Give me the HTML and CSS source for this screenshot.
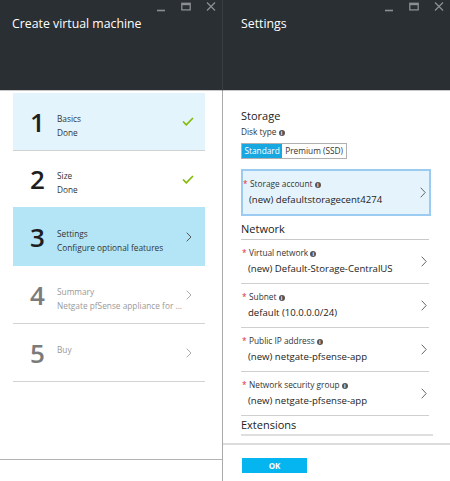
FILE: index.html
```html
<!DOCTYPE html>
<html>
<head>
<meta charset="utf-8">
<link rel="stylesheet" href="styles.css">
</head>
<body>
<div class="blade blade-left">
  <header class="hdr hdr-left">
    <div class="ctrls">
      <svg class="ic" width="10" height="12" viewBox="0 0 10 12"><path d="M1 10.5H9" stroke="#8b8f93" stroke-width="1.6"/></svg>
      <svg class="ic" width="10" height="12" viewBox="0 0 10 12"><rect x="0.8" y="3.3" width="8.4" height="6.6" fill="none" stroke="#8b8f93" stroke-width="1.3"/><path d="M0.8 4.2H9.2" stroke="#8b8f93" stroke-width="2"/></svg>
      <svg class="ic" width="10" height="12" viewBox="0 0 10 12"><path d="M1 2.5L9 10.5M9 2.5L1 10.5" stroke="#8b8f93" stroke-width="1.3"/></svg>
    </div>
    <div class="title">Create virtual machine</div>
  </header>
  <main class="steps">
    <div class="step s1">
      <div class="num">1</div>
      <div class="lbl"><div>Basics</div><div>Done</div></div>
      <svg class="mark" width="12" height="9" viewBox="0 0 12 9"><path d="M1 4.5L4.3 7.8L11 1" fill="none" stroke="#7fba00" stroke-width="1.6"/></svg>
    </div>
    <div class="step s2">
      <div class="num">2</div>
      <div class="lbl"><div>Size</div><div>Done</div></div>
      <svg class="mark" width="12" height="9" viewBox="0 0 12 9"><path d="M1 4.5L4.3 7.8L11 1" fill="none" stroke="#7fba00" stroke-width="1.6"/></svg>
    </div>
    <div class="step s3">
      <div class="num">3</div>
      <div class="lbl"><div>Settings</div><div>Configure optional features</div></div>
      <svg class="mark chev-l" width="6" height="10" viewBox="0 0 6 10"><path d="M0.7 0.7L5 5L0.7 9.3" fill="none" stroke="#555" stroke-width="1"/></svg>
    </div>
    <div class="step dim">
      <div class="num">4</div>
      <div class="lbl"><div>Summary</div><div>Netgate pfSense appliance for ...</div></div>
      <svg class="mark chev-l" width="6" height="10" viewBox="0 0 6 10"><path d="M0.7 0.7L5 5L0.7 9.3" fill="none" stroke="#aaa" stroke-width="1"/></svg>
    </div>
    <div class="step dim">
      <div class="num">5</div>
      <div class="lbl"><div>Buy</div><div>&nbsp;</div></div>
      <svg class="mark chev-l" width="6" height="10" viewBox="0 0 6 10"><path d="M0.7 0.7L5 5L0.7 9.3" fill="none" stroke="#aaa" stroke-width="1"/></svg>
    </div>
  </main>
  <footer class="foot foot-left"></footer>
</div>
<div class="blade blade-right">
  <header class="hdr hdr-right">
    <div class="ctrls">
      <svg class="ic" width="10" height="12" viewBox="0 0 10 12"><path d="M1 10.5H9" stroke="#8b8f93" stroke-width="1.6"/></svg>
      <svg class="ic" width="10" height="12" viewBox="0 0 10 12"><rect x="0.8" y="3.3" width="8.4" height="6.6" fill="none" stroke="#8b8f93" stroke-width="1.3"/><path d="M0.8 4.2H9.2" stroke="#8b8f93" stroke-width="2"/></svg>
      <svg class="ic" width="10" height="12" viewBox="0 0 10 12"><path d="M1 2.5L9 10.5M9 2.5L1 10.5" stroke="#8b8f93" stroke-width="1.3"/></svg>
    </div>
    <div class="title title-right">Settings</div>
  </header>
  <main class="settings">
    <div class="sec">Storage</div>
    <div class="small">Disk type <span class="info">i</span></div>
    <div class="toggle"><span class="opt on">Standard</span><span class="opt">Premium (SSD)</span></div>
    <div class="row box">
      <div class="rtext">
        <div class="rlabel"><span class="req">*</span>Storage account <span class="info">i</span></div>
        <div class="rval">(new) defaultstoragecent4274</div>
      </div>
      <svg class="chev" width="6" height="11" viewBox="0 0 6 11"><path d="M0.7 0.7L5.2 5.5L0.7 10.3" fill="none" stroke="#666" stroke-width="1"/></svg>
    </div>
    <div class="sec sec-line">Network</div>
    <div class="row">
      <div class="rtext">
        <div class="rlabel"><span class="req">*</span>Virtual network <span class="info">i</span></div>
        <div class="rval">(new) Default-Storage-CentralUS</div>
      </div>
      <svg class="chev" width="6" height="11" viewBox="0 0 6 11"><path d="M0.7 0.7L5.2 5.5L0.7 10.3" fill="none" stroke="#666" stroke-width="1"/></svg>
    </div>
    <div class="row">
      <div class="rtext">
        <div class="rlabel"><span class="req">*</span>Subnet <span class="info">i</span></div>
        <div class="rval">default (10.0.0.0/24)</div>
      </div>
      <svg class="chev" width="6" height="11" viewBox="0 0 6 11"><path d="M0.7 0.7L5.2 5.5L0.7 10.3" fill="none" stroke="#666" stroke-width="1"/></svg>
    </div>
    <div class="row">
      <div class="rtext">
        <div class="rlabel"><span class="req">*</span>Public IP address <span class="info">i</span></div>
        <div class="rval">(new) netgate-pfsense-app</div>
      </div>
      <svg class="chev" width="6" height="11" viewBox="0 0 6 11"><path d="M0.7 0.7L5.2 5.5L0.7 10.3" fill="none" stroke="#666" stroke-width="1"/></svg>
    </div>
    <div class="row">
      <div class="rtext">
        <div class="rlabel"><span class="req">*</span>Network security group <span class="info">i</span></div>
        <div class="rval">(new) netgate-pfsense-app</div>
      </div>
      <svg class="chev" width="6" height="11" viewBox="0 0 6 11"><path d="M0.7 0.7L5.2 5.5L0.7 10.3" fill="none" stroke="#666" stroke-width="1"/></svg>
    </div>
    <div class="sec sec-ext">Extensions</div>
  </main>
  <footer class="foot foot-right">
    <button class="ok">OK</button>
  </footer>
</div>
</body>
</html>
```

FILE: styles.css
```css
* { box-sizing: border-box; }
html, body { margin: 0; padding: 0; }
body {
  width: 450px;
  height: 481px;
  display: flex;
  overflow: hidden;
  background: #fff;
  font-family: "Open Sans", "Noto Sans", sans-serif;
  color: #222;
}
.blade {
  display: flex;
  flex-direction: column;
  height: 481px;
}
.blade-left { width: 223px; }
.blade-right { flex: 1; }

.hdr {
  height: 91px;
  background: #2a2f33;
  border-bottom: 1px solid #c8c8c8;
  display: flex;
  flex-direction: column;
}
.hdr-left { border-right: 1px solid #3a3f44; }
.ctrls {
  display: flex;
  justify-content: flex-end;
  gap: 15px;
  padding: 0 6px 0 0;
  height: 14px;
}
.ic { display: block; }
.title {
  color: #fff;
  font-size: 12.3px;
  line-height: 20px;
  padding-left: 12px;
}
.title-right { padding-left: 18px; }

/* left steps */
.steps {
  flex: 1;
  padding: 2px 17px 0 13px;
  border-right: 1px solid #a9a9a9;
}
.step {
  height: 58px;
  display: flex;
  align-items: center;
  border-bottom: 1px solid #d2d2d2;
}
.s1 { background: #e4f4fc; }
.s2 { height: 56px; border-bottom: none; }
.s3 { height: 59px; border-bottom: none; background: #b3e5f6; }
.num {
  width: 44px;
  padding-left: 17px;
  font-size: 26px;
  font-weight: 600;
  line-height: 30px;
  color: #1e1e1e;
}
.lbl {
  flex: 1;
  font-size: 8.3px;
  line-height: 14px;
  margin-top: 8px;
  color: #333;
  white-space: nowrap;
}
.mark { margin-right: 11px; display: block; }
.chev-l { margin-right: 13px; }
.dim .num { color: #7b7b7b; }
.dim .lbl { color: #999; }
.foot-left {
  height: 22px;
  border-top: 1px solid #b4b4b4;
  border-right: 1px solid #a9a9a9;
}

/* right settings */
.settings {
  flex: 1;
  padding: 17px 21px 0 18px;
}
.sec {
  font-size: 11px;
  line-height: 16px;
  color: #222;
}
.sec-line {
  margin-top: 5px;
  padding-bottom: 2px;
  border-bottom: 1px solid #c9c9c9;
}
.sec-ext {
  line-height: 17px;
  padding-bottom: 1px;
  border-bottom: 2px solid #dedede;
  margin-right: -4px;
}
.small {
  font-size: 8.3px;
  line-height: 12px;
  margin-top: 2px;
  color: #333;
}
.info {
  display: inline-block;
  width: 6px;
  height: 6px;
  border-radius: 50%;
  background: #555;
  color: #fff;
  font-size: 5px;
  line-height: 6px;
  text-align: center;
  font-weight: bold;
  vertical-align: 0px;
}
.toggle {
  display: flex;
  width: 106px;
  margin-top: 5px;
  border: 1px solid #b0b0b0;
  height: 16px;
  white-space: nowrap;
}
.opt {
  font-size: 8.3px;
  line-height: 14px;
  padding: 0 3px;
  color: #333;
}
.opt.on { background: #17a7e1; color: #fff; width: 42px; text-align: center; padding: 0; }

.row {
  display: flex;
  align-items: center;
  height: 44px;
  border-bottom: 1px solid #cfcfcf;
  padding-left: 1px;
}
.rtext { flex: 1; }
.rlabel {
  font-size: 8.3px;
  line-height: 12px;
  color: #333;
}
.req {
  display: inline-block;
  width: 7px;
  color: #e0283a;
}
.rval {
  font-size: 9.6px;
  line-height: 16px;
  margin-top: 2px;
  padding-left: 6px;
  color: #222;
}
.chev { display: block; margin-right: 2px; }
.box {
  margin-top: 10px;
  height: 47px;
  margin-right: -2px;
  background: #e5f3fd;
  border: 2px solid #9ccbf1;
  padding-left: 0;
}
.box .chev { margin-right: 3px; }

.foot-right {
  height: 38px;
  border-top: 2px solid #dcdcdc;
  padding: 13px 0 0 19px;
}
.ok {
  display: block;
  width: 65px;
  height: 15px;
  border: none;
  background: #05b5ef;
  color: #fff;
  font-family: "Open Sans", sans-serif;
  font-weight: bold;
  font-size: 8px;
  padding: 0;
}
```
